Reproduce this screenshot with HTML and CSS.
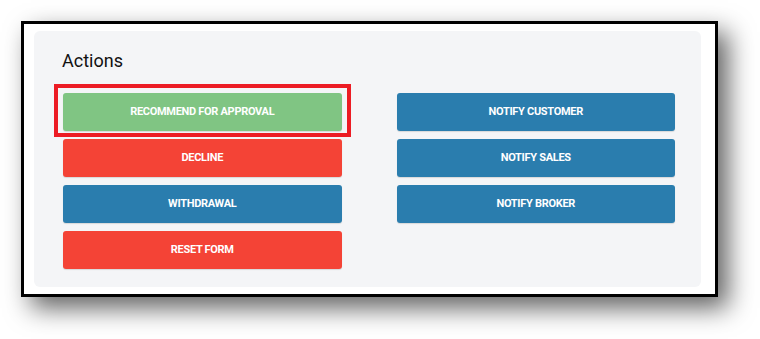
FILE: index.html
```html
<!DOCTYPE html>
<html>
<head>
<meta charset="utf-8">
<link rel="stylesheet" href="styles.css">
</head>
<body>
<div class="frame">
  <div class="card">
    <h2 class="title">Actions</h2>
    <div class="grid">
      <div class="col">
        <div class="highlight-wrap">
          <button class="btn green">RECOMMEND FOR APPROVAL</button>
          <span class="highlight"></span>
        </div>
        <button class="btn red">DECLINE</button>
        <button class="btn blue">WITHDRAWAL</button>
        <button class="btn red">RESET FORM</button>
      </div>
      <div class="col">
        <button class="btn blue">NOTIFY CUSTOMER</button>
        <button class="btn blue">NOTIFY SALES</button>
        <button class="btn blue">NOTIFY BROKER</button>
      </div>
    </div>
  </div>
</div>
</body>
</html>
```

FILE: styles.css
```css
html, body {
  margin: 0;
  padding: 0;
  background: #ffffff;
}
body {
  padding: 21px 0 0 21px;
  height: 339px;
  box-sizing: border-box;
  overflow: hidden;
  font-family: Roboto, "Liberation Sans", sans-serif;
}
.frame {
  border: 3px solid #000;
  background: #fff;
  box-shadow: 10px 11px 24px rgba(0, 0, 0, 0.62);
  padding: 7px 14px 7px 10px;
  box-sizing: content-box;
  width: 667px;
  height: 256px;
}
.card {
  background: #f4f5f7;
  border-radius: 6px;
  height: 256px;
  padding: 0 26px 0 28px;
  box-sizing: border-box;
}
.title {
  margin: 0;
  padding-top: 20px;
  font-size: 18px;
  font-weight: 400;
  color: #111;
  line-height: 20px;
  height: 42px;
  box-sizing: content-box;
}
.grid {
  display: grid;
  grid-template-columns: 1fr 1fr;
  column-gap: 55px;
  padding-left: 1px;
}
.col {
  display: flex;
  flex-direction: column;
  gap: 8.5px;
}
.btn {
  display: block;
  width: 100%;
  height: 37.5px;
  border: none;
  border-radius: 3px;
  color: #fff;
  font-family: Roboto, "Liberation Sans", sans-serif;
  font-size: 11px;
  font-weight: 700;
  letter-spacing: -0.3px;
  padding: 0;
  box-shadow: 0 1px 1px rgba(0, 0, 0, 0.12);
}
.green { background: #80c583; }
.red { background: #f44336; }
.blue { background: #2a7dae; }
.highlight-wrap {
  position: relative;
}
.highlight {
  position: absolute;
  left: -9.5px;
  top: -9px;
  right: -9px;
  bottom: -6px;
  border: 4px solid #ec1c24;
  pointer-events: none;
}
```
